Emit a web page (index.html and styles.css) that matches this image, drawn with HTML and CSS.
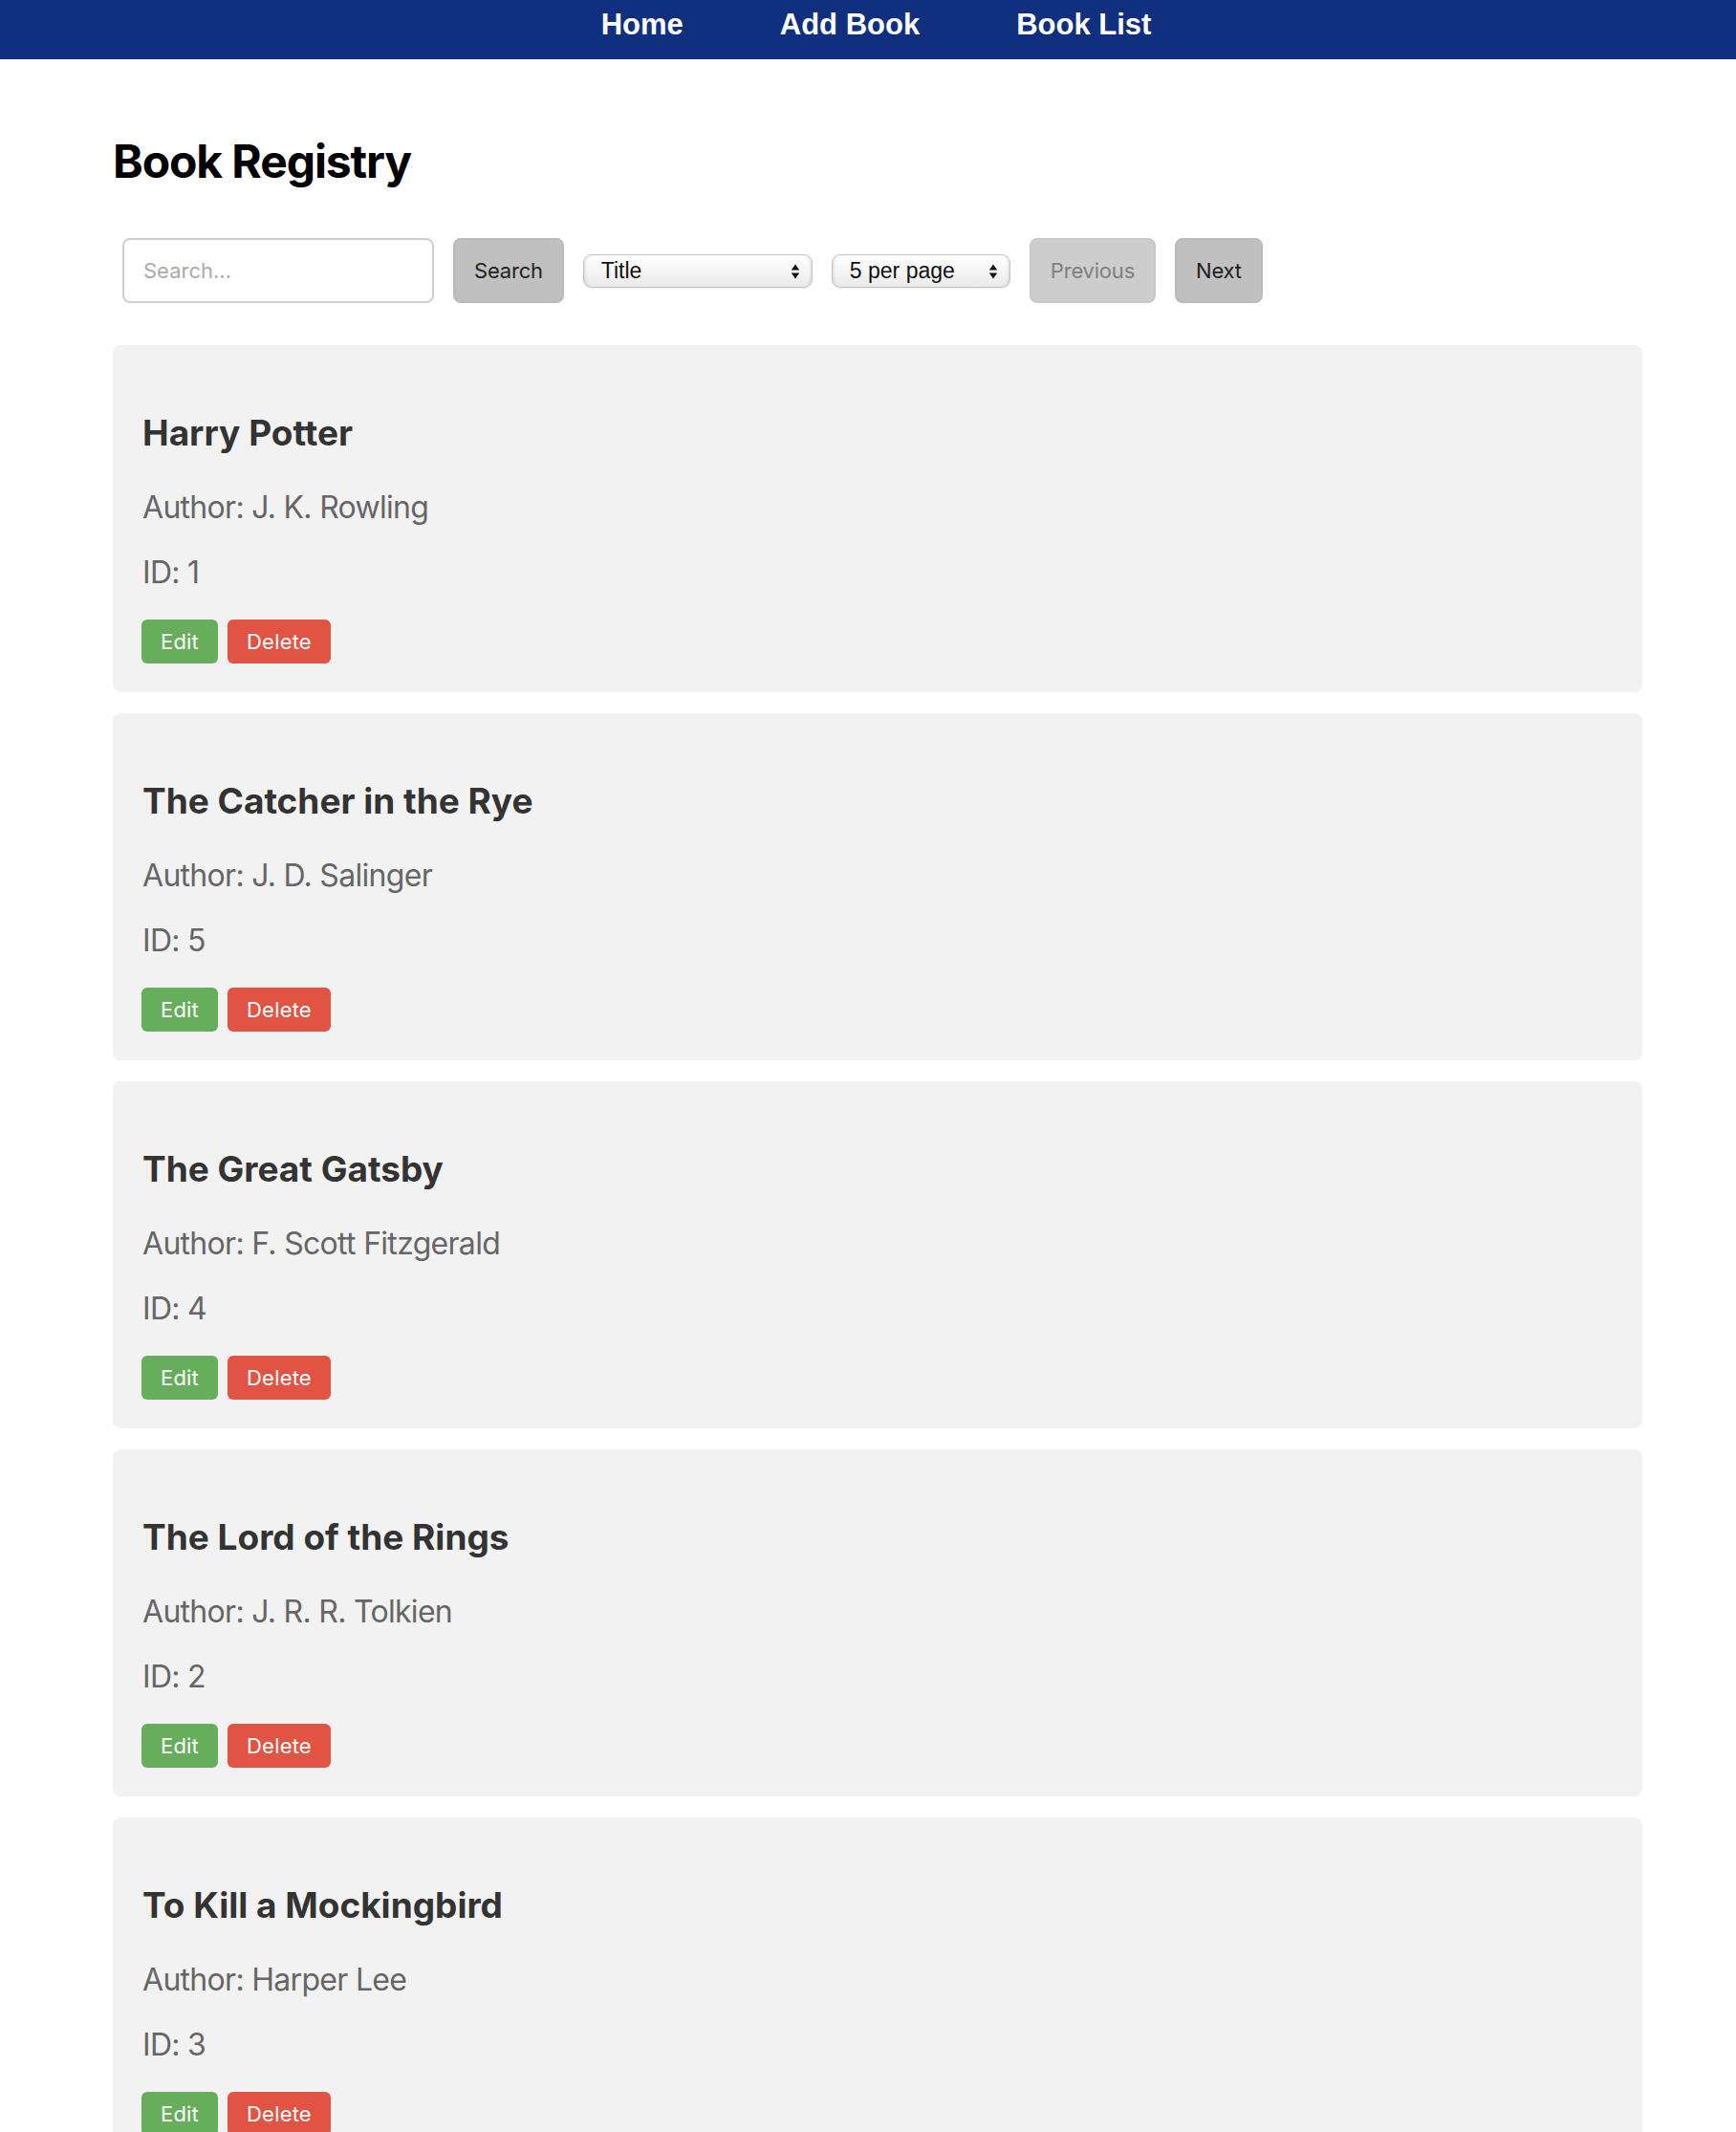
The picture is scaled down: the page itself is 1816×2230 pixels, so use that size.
FILE: index.html
```html
<!DOCTYPE html>
<html lang="en">
<head>
<meta charset="utf-8">
<title>Book Registry</title>
<link rel="stylesheet" href="styles.css">
</head>
<body>
<nav class="topnav">
  <a class="navlink" href="#">Home</a>
  <a class="navlink" href="#">Add Book</a>
  <a class="navlink" href="#">Book List</a>
</nav>
<main class="container">
  <h2 class="page-title">Book Registry</h2>
  <div class="controls">
    <input class="search-input" type="text" placeholder="Search...">
    <button class="ctl-btn">Search</button>
    <span class="select-wrap select-title">
      <select class="ctl-select"><option>Title</option><option>Author</option></select>
      <svg class="select-arrow" width="10" height="16" viewBox="0 0 10 16"><path d="M5 0.5 L9.2 6.5 H0.8 Z M5 15.5 L9.2 9.5 H0.8 Z" fill="#111"/></svg>
    </span>
    <span class="select-wrap select-per">
      <select class="ctl-select"><option>5 per page</option><option>10 per page</option></select>
      <svg class="select-arrow" width="10" height="16" viewBox="0 0 10 16"><path d="M5 0.5 L9.2 6.5 H0.8 Z M5 15.5 L9.2 9.5 H0.8 Z" fill="#111"/></svg>
    </span>
    <button class="ctl-btn ctl-disabled" disabled>Previous</button>
    <button class="ctl-btn">Next</button>
  </div>
  <div class="book-list">
    <div class="card">
      <h3 class="book-title">Harry Potter</h3>
      <p class="book-meta">Author: J. K. Rowling</p>
      <p class="book-meta">ID: 1</p>
      <div class="actions"><button class="btn-edit">Edit</button><button class="btn-delete">Delete</button></div>
    </div>
    <div class="card">
      <h3 class="book-title">The Catcher in the Rye</h3>
      <p class="book-meta">Author: J. D. Salinger</p>
      <p class="book-meta">ID: 5</p>
      <div class="actions"><button class="btn-edit">Edit</button><button class="btn-delete">Delete</button></div>
    </div>
    <div class="card">
      <h3 class="book-title">The Great Gatsby</h3>
      <p class="book-meta">Author: F. Scott Fitzgerald</p>
      <p class="book-meta">ID: 4</p>
      <div class="actions"><button class="btn-edit">Edit</button><button class="btn-delete">Delete</button></div>
    </div>
    <div class="card">
      <h3 class="book-title">The Lord of the Rings</h3>
      <p class="book-meta">Author: J. R. R. Tolkien</p>
      <p class="book-meta">ID: 2</p>
      <div class="actions"><button class="btn-edit">Edit</button><button class="btn-delete">Delete</button></div>
    </div>
    <div class="card">
      <h3 class="book-title">To Kill a Mockingbird</h3>
      <p class="book-meta">Author: Harper Lee</p>
      <p class="book-meta">ID: 3</p>
      <div class="actions"><button class="btn-edit">Edit</button><button class="btn-delete">Delete</button></div>
    </div>
  </div>
</main>
</body>
</html>
```

FILE: styles.css
```css
html, body {
  margin: 0;
  padding: 0;
  background: #ffffff;
}

body {
  font-family: Inter, "Liberation Sans", sans-serif;
  color: #000;
}

.topnav {
  background: #102f7f;
  height: 62px;
  box-sizing: border-box;
  padding: 8px 0 18px 17px;
  display: flex;
  justify-content: center;
  gap: 101px;
}

.navlink {
  font-family: "Liberation Sans", Arial, sans-serif;
  font-weight: bold;
  font-size: 31px;
  line-height: 36px;
  color: #ffffff;
  text-decoration: none;
}

.container {
  width: 1600px;
  margin-left: 118px;
}

.page-title {
  font-size: 48px;
  line-height: 58px;
  font-weight: 700;
  letter-spacing: -1.1px;
  margin: 78px 0 41px 0;
  color: #000;
}

.controls {
  display: flex;
  align-items: center;
}

.search-input {
  box-sizing: border-box;
  width: 326px;
  height: 68px;
  margin: 10px;
  border: 2px solid #cfcfcf;
  border-radius: 8px;
  padding: 0 0 0 20px;
  font-family: Inter, sans-serif;
  font-size: 22px;
  color: #333;
  outline: none;
}

.search-input::placeholder {
  color: #ababab;
}

.ctl-btn {
  box-sizing: border-box;
  height: 68px;
  margin: 10px;
  padding: 0 20px;
  background: #c0c0c0;
  border: 2px solid #bababa;
  border-radius: 8px;
  font-family: Inter, sans-serif;
  font-size: 22px;
  letter-spacing: -0.2px;
  color: #222;
}

.ctl-disabled {
  background: #cdcdcd;
  border-color: #c8c8c8;
  color: #808080;
}

.select-wrap {
  position: relative;
  display: inline-block;
  margin: 10px;
  height: 35px;
}

.select-title { width: 240px; }
.select-per { width: 187px; }

.ctl-select {
  -webkit-appearance: none;
  appearance: none;
  box-sizing: border-box;
  width: 100%;
  height: 35px;
  margin: 0;
  padding: 0 0 0 18px;
  border: 1px solid #c3c3c3;
  border-radius: 9px;
  background: linear-gradient(#ffffff 0%, #f6f6f6 45%, #e9e9e9 100%);
  box-shadow: inset 3px 0 3px -2px rgba(0,0,0,0.12), inset -3px 0 3px -2px rgba(0,0,0,0.12), 0 1px 1px rgba(0,0,0,0.08);
  font-family: "Liberation Sans", Arial, sans-serif;
  font-size: 23px;
  color: #111;
  outline: none;
}

.select-arrow {
  position: absolute;
  right: 13px;
  top: 10px;
  pointer-events: none;
}

.book-list {
  margin-top: 34px;
  display: flex;
  flex-direction: column;
  gap: 22px;
}

.card {
  background: #f2f2f2;
  border-radius: 8px;
  padding: 30px 30px 30px 30px;
}

.book-title {
  font-size: 37px;
  line-height: 44px;
  font-weight: 700;
  color: #333;
  margin: 40px 0 37px 1px;
  letter-spacing: 0;
}

.book-meta {
  font-size: 32px;
  line-height: 38px;
  color: #666;
  margin: 0 0 30px 1px;
  letter-spacing: -0.7px;
}

.actions {
  display: flex;
  gap: 10px;
}

.btn-edit, .btn-delete {
  height: 46px;
  padding: 0 20px;
  border: none;
  border-radius: 6px;
  font-family: Inter, sans-serif;
  font-size: 22px;
  letter-spacing: 0.2px;
  color: #fff;
}

.btn-edit { background: #66ad5c; }
.btn-delete { background: #e15444; }
```
